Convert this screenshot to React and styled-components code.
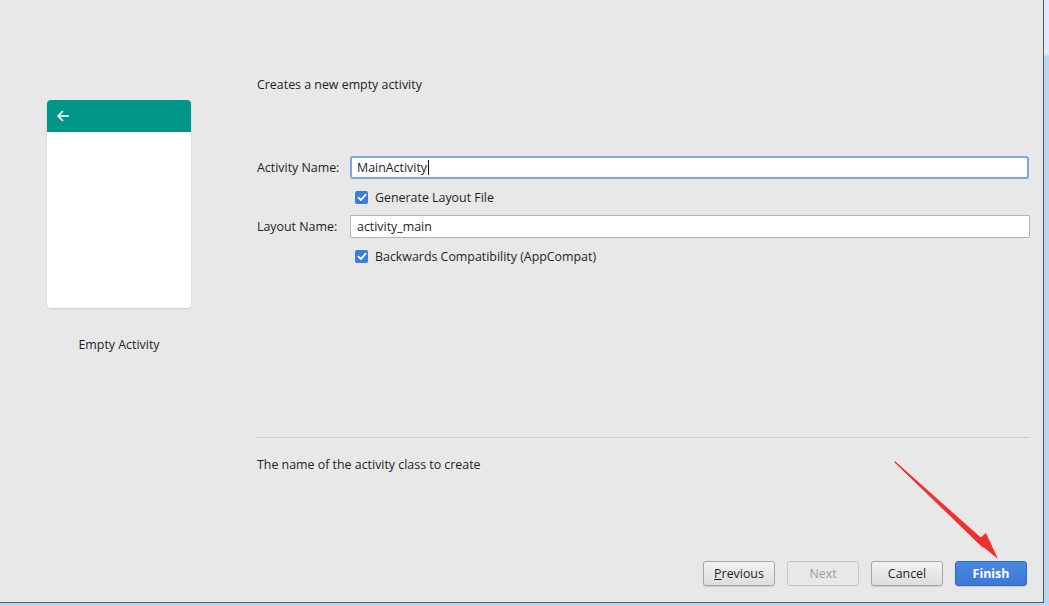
import React from "react";
import styled, { createGlobalStyle } from "styled-components";

const Global = createGlobalStyle`
  html, body { margin: 0; padding: 0; }
  body {
    width: 1049px; height: 606px; overflow: hidden;
    background: linear-gradient(to bottom, #dfeaf6 0px, #dfeaf6 55px, #bcd6ef 56px, #bcd6ef 100%);
    font-family: "Open Sans", "Noto Sans", sans-serif;
    font-size: 12.4px;
    color: #1e1e1e;
  }
`;

const Window = styled.div`
  position: relative;
  width: 1043px;
  height: 602px;
  background: #e8e8e8;
  border-right: 1px solid #4f5b66;
  border-bottom: 1px solid #4f5b66;
  display: flex;
  flex-direction: column;
`;

const Main = styled.div`
  display: flex;
  flex: 1;
`;

const LeftPane = styled.div`
  width: 238px;
  padding-top: 100px;
  display: flex;
  flex-direction: column;
  align-items: center;
`;

const Card = styled.div`
  width: 144px;
  height: 208px;
  background: #ffffff;
  border-radius: 4px;
  box-shadow: 0 1px 2px rgba(0,0,0,0.12);
  overflow: hidden;
`;

const CardHeader = styled.div`
  height: 32px;
  background: #009688;
  display: flex;
  align-items: center;
  padding-left: 9px;
`;

const CardLabel = styled.div`
  margin-top: 28px;
  line-height: 17px;
`;

const RightPane = styled.div`
  flex: 1;
  margin-left: 19px;
  padding-right: 13px;
  display: flex;
  flex-direction: column;
`;

const Description = styled.div`
  margin-top: 76px;
  line-height: 17px;
`;

const Form = styled.div`
  margin-top: 63px;
  display: grid;
  grid-template-columns: 93px 1fr;
  align-items: center;
`;

const Label = styled.div`
  line-height: 17px;
`;

const Input = styled.div`
  height: 23px;
  box-sizing: border-box;
  background: #fff;
  border: ${p => (p.$focused ? "2px solid #7aa7e6" : "1px solid #b4b4b4")};
  border-radius: ${p => (p.$focused ? "3px" : "1px")};
  padding-left: ${p => (p.$focused ? "5px" : "6px")};
  display: flex;
  align-items: center;
  margin-right: ${p => (p.$focused ? "1px" : "0")};
`;

const Caret = styled.span`
  display: inline-block;
  width: 1px;
  height: 15px;
  background: #111;
  margin-left: 1px;
`;

const CheckRow = styled.div`
  grid-column: 2;
  display: flex;
  align-items: center;
  gap: 7px;
  padding-left: 5px;
  height: ${p => p.$h}px;
`;

const Box = styled.span`
  width: 13px;
  height: 13px;
  border-radius: 2px;
  background: #3b7ddd;
  display: flex;
  align-items: center;
  justify-content: center;
`;

const Spacer = styled.div`
  flex: 1;
`;

const Divider = styled.div`
  height: 1px;
  background: #cdcdcd;
`;

const Hint = styled.div`
  margin-top: 18px;
  line-height: 17px;
`;

const Footer = styled.div`
  display: flex;
  justify-content: flex-end;
  gap: 12px;
  padding: 0 16px 16px 0;
  height: 25px;
  margin-top: 88px;
`;

const Button = styled.button`
  width: 72px;
  height: 25px;
  box-sizing: border-box;
  border-radius: 3px;
  font-family: inherit;
  font-size: 12.4px;
  padding: 0;
  cursor: default;
  border: 1px solid ${p => (p.$primary ? "#3469c0" : p.$disabled ? "#c6c6c6" : "#a7a7a7")};
  color: ${p => (p.$primary ? "#ffffff" : p.$disabled ? "#9e9e9e" : "#1e1e1e")};
  font-weight: ${p => (p.$primary ? 700 : 400)};
  background: ${p =>
    p.$primary
      ? "linear-gradient(#4a8ae2, #3b78d6)"
      : p.$disabled
      ? "#e8e8e8"
      : "linear-gradient(#f2f2f2, #dedede)"};
  box-shadow: ${p => (p.$disabled ? "none" : "0 1px 1px rgba(0,0,0,0.12)")};
  u { text-decoration: underline; }
`;

const Annotation = styled.svg`
  position: absolute;
  left: 0;
  top: 0;
  pointer-events: none;
`;

const Check = () => (
  <svg width="10" height="9" viewBox="0 0 10 9">
    <path d="M1.5 4.6 L4 7 L8.6 1.6" fill="none" stroke="#fff" strokeWidth="1.8" strokeLinecap="round" strokeLinejoin="round" />
  </svg>
);

export default function App() {
  return (
    <>
      <Global />
      <Window>
        <Main>
          <LeftPane>
            <Card>
              <CardHeader>
                <svg width="14" height="14" viewBox="0 0 14 14">
                  <path d="M13 7 H2 M7 2 L2 7 L7 12" fill="none" stroke="#fff" strokeWidth="1.6" />
                </svg>
              </CardHeader>
            </Card>
            <CardLabel>Empty Activity</CardLabel>
          </LeftPane>
          <RightPane>
            <Description>Creates a new empty activity</Description>
            <Form>
              <Label>Activity Name:</Label>
              <Input $focused>
                MainActivity<Caret />
              </Input>
              <CheckRow $h={36}>
                <Box><Check /></Box>
                Generate Layout File
              </CheckRow>
              <Label>Layout Name:</Label>
              <Input>activity_main</Input>
              <CheckRow $h={36}>
                <Box><Check /></Box>
                Backwards Compatibility (AppCompat)
              </CheckRow>
            </Form>
            <Spacer />
            <Divider />
            <Hint>The name of the activity class to create</Hint>
          </RightPane>
        </Main>
        <Footer>
          <Button><u>P</u>revious</Button>
          <Button $disabled>Next</Button>
          <Button>Cancel</Button>
          <Button $primary>Finish</Button>
        </Footer>
        <Annotation width="1043" height="602" viewBox="0 0 1043 602">
          <path d="M895 462 L986 543 L983 547 Z" fill="#f0302f" stroke="#f0302f" strokeWidth="1.2" strokeLinejoin="round" />
          <path d="M976 541 L998 559 L986 533 Z" fill="#f0302f" />
        </Annotation>
      </Window>
    </>
  );
}
